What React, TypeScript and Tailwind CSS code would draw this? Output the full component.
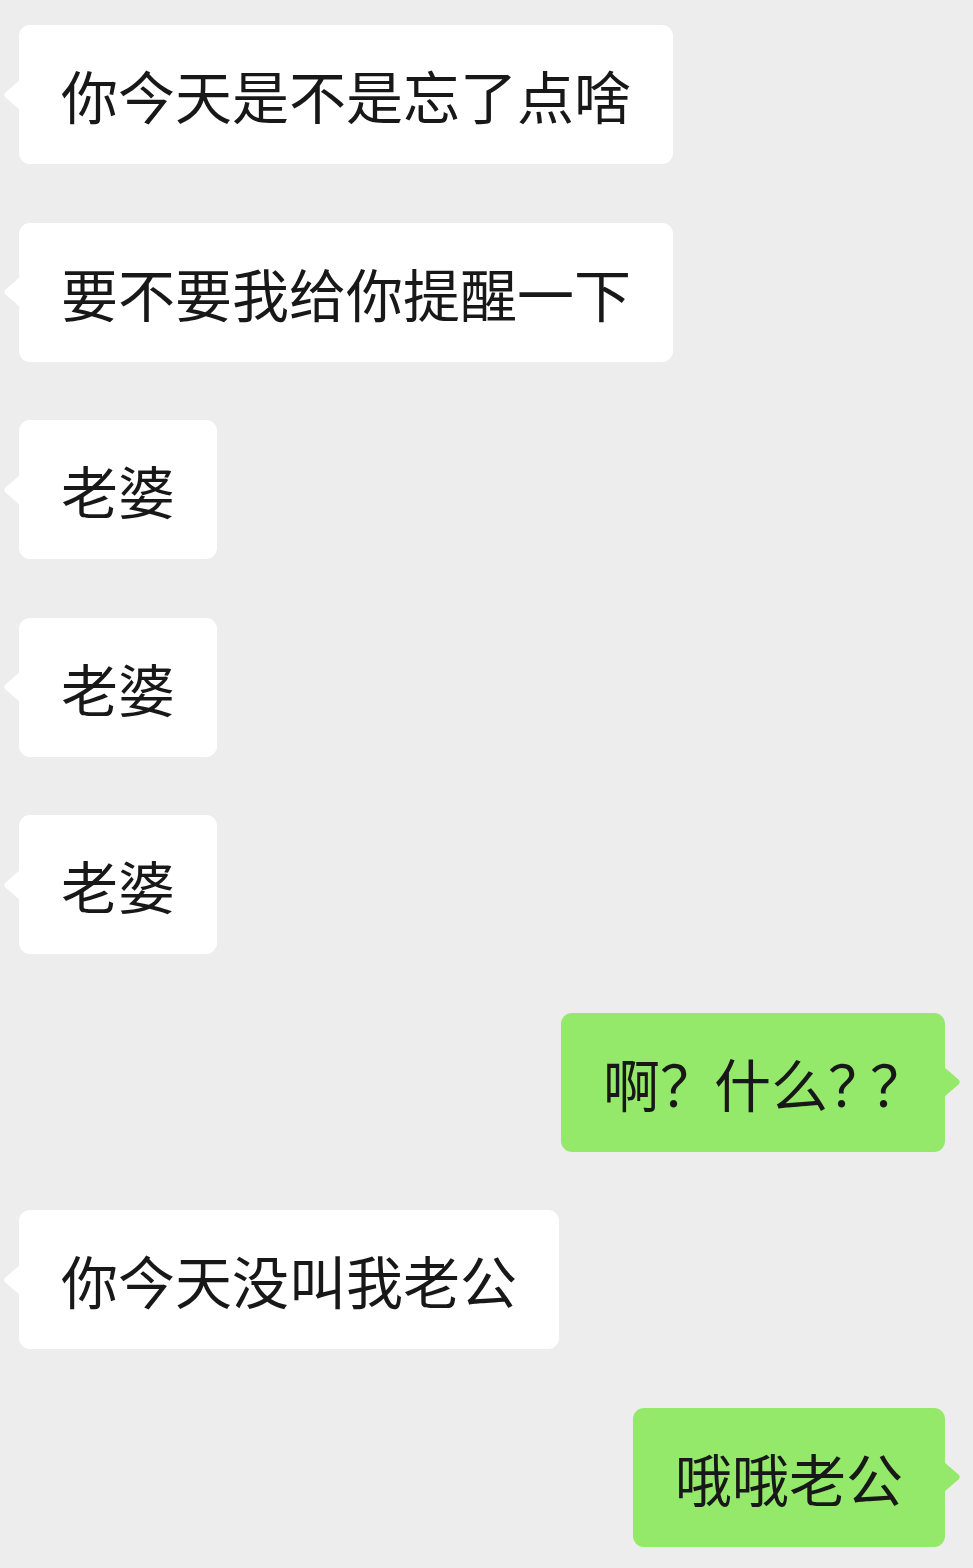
import React from 'react';

type Msg = { text: React.ReactNode; mine?: boolean };

const messages: Msg[] = [
  { text: '你今天是不是忘了点啥' },
  { text: '要不要我给你提醒一下' },
  { text: '老婆' },
  { text: '老婆' },
  { text: '老婆' },
  {
    mine: true,
    text: (
      <>
        啊<span className="tracking-[-3px]">？</span>什么<span className="tracking-[-15px]">？</span>
        <span className="tracking-[-24px]">？</span>
      </>
    ),
  },
  { text: '你今天没叫我老公' },
  { text: '哦哦老公', mine: true },
];

// little pointer on the side of each bubble
const Tail: React.FC<{ mine?: boolean }> = ({ mine }) => (
  <svg
    width="18"
    height="30"
    viewBox="0 0 18 30"
    className={`absolute top-1/2 -translate-y-1/2 ${mine ? 'right-[-17px] scale-x-[-1]' : 'left-[-17px]'}`}
  >
    <path d="M18 0 L3.5 12.6 Q1 15 3.5 17.4 L18 30 Z" fill={mine ? '#95e96a' : '#ffffff'} />
  </svg>
);

const Bubble: React.FC<Msg> = ({ text, mine }) => (
  <div className={`flex ${mine ? 'justify-end pr-[28px]' : 'justify-start pl-[19px]'}`}>
    <div
      className={`relative flex h-[139px] items-center rounded-[11px] px-[42px] text-[57px] leading-none text-[#181818] ${
        mine ? 'bg-[#95e96a]' : 'bg-white'
      }`}
    >
      <Tail mine={mine} />
      <span className="whitespace-nowrap">{text}</span>
    </div>
  </div>
);

export default function App() {
  return (
    <div
      className="flex h-[1568px] w-full flex-col gap-[58.5px] overflow-hidden bg-[#ededed] pt-[25px]"
      style={{ fontFamily: '"Noto Sans CJK SC", "Noto Sans", sans-serif' }}
    >
      {messages.map((m, i) => (
        <Bubble key={i} {...m} />
      ))}
    </div>
  );
}
